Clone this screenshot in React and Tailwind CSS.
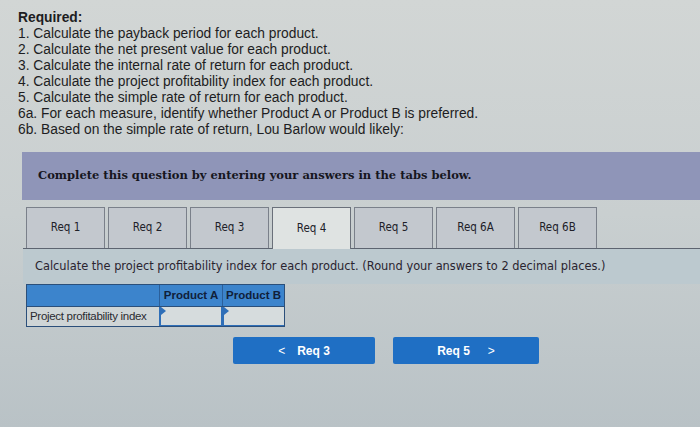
export default function App() {
  const tabs = ["Req 1", "Req 2", "Req 3", "Req 4", "Req 5", "Req 6A", "Req 6B"];
  const lines = [
    "1. Calculate the payback period for each product.",
    "2. Calculate the net present value for each product.",
    "3. Calculate the internal rate of return for each product.",
    "4. Calculate the project profitability index for each product.",
    "5. Calculate the simple rate of return for each product.",
    "6a. For each measure, identify whether Product A or Product B is preferred.",
    "6b. Based on the simple rate of return, Lou Barlow would likely:",
  ];

  return (
    <div className="w-[700px] h-[427px] overflow-hidden bg-gradient-to-b from-[#d2d6d5] via-[#c9cfd0] to-[#b9c2c6] font-['Liberation_Sans',Arial,sans-serif]">
      {/* Required list */}
      <div className="pt-[10px] pl-[18px] text-[13.8px] leading-[16px] text-[#1d1d22]">
        <div className="font-bold">Required:</div>
        {lines.map((l) => (
          <div key={l}>{l}</div>
        ))}
      </div>

      {/* Banner */}
      <div className="mt-[14px] ml-[22px] h-[48px] bg-[#8f95b8] flex items-center pl-[16px]">
        <span className="font-['DejaVu_Serif',serif] font-bold text-[11.5px] text-[#16161e] whitespace-nowrap">
          Complete this question by entering your answers in the tabs below.
        </span>
      </div>

      {/* Tabs */}
      <div className="mt-[7px] ml-[23px] flex items-end gap-[3px] border-b border-[#5d6470] pl-[3px]">
        {tabs.map((t) => {
          const active = t === "Req 4";
          return (
            <div
              key={t}
              className={
                active
                  ? "w-[79px] h-[42px] -mb-px border border-b-0 border-[#6a707a] bg-[#dfe3e2] flex items-center justify-center"
                  : "w-[79px] h-[41px] border border-b-0 border-[#7a808a] bg-[#c3c8ce] flex items-center justify-center"
              }
            >
              <span className="font-['DejaVu_Sans_Condensed','DejaVu_Sans',sans-serif] text-[11.5px] text-[#202028]">
                {t}
              </span>
            </div>
          );
        })}
      </div>

      {/* Content */}
      <div className="ml-[23px] bg-[#bcc9cf] h-[35px] flex items-center pl-[12px]">
        <span className="font-['DejaVu_Sans',sans-serif] text-[11.4px] text-[#2a2430] whitespace-nowrap">
          Calculate the project profitability index for each product. (Round your answers to 2 decimal places.)
        </span>
      </div>

      {/* Table */}
      <div className="ml-[26px] w-[259px] border border-[#2b4f7a]">
        <div className="flex h-[21px] bg-[#3c84cc] text-[11.5px] font-bold text-[#10203a]">
          <div className="w-[132px]" />
          <div className="w-[63px] border-l border-[#2b5f9a] flex items-center justify-center">Product A</div>
          <div className="w-[62px] border-l border-[#2b5f9a] flex items-center justify-center">Product B</div>
        </div>
        <div className="flex h-[20px] bg-[#cfd5d6] border-t border-[#2b4f7a] text-[11.5px] text-[#2a2a30]">
          <div className="w-[132px] flex items-center pl-[3px] tracking-[-0.3px]">Project profitability index</div>
          <div className="relative w-[63px] border-l-2 border-r border-b border-[#2f6fb8] bg-[#d6dcdd]">
            <span className="absolute left-0 top-0 w-0 h-0 border-t-[4px] border-b-[4px] border-l-[5px] border-t-transparent border-b-transparent border-l-[#2f6fb8]" />
          </div>
          <div className="relative w-[62px] border-l-2 border-b border-[#2f6fb8] bg-[#d6dcdd]">
            <span className="absolute left-0 top-0 w-0 h-0 border-t-[4px] border-b-[4px] border-l-[5px] border-t-transparent border-b-transparent border-l-[#2f6fb8]" />
          </div>
        </div>
      </div>

      {/* Nav buttons */}
      <div className="mt-[10px] ml-[233px] flex gap-[18px]">
        <div className="w-[142px] h-[27px] rounded-[2px] bg-[#1f6fc4] flex items-center justify-center gap-[12px] text-white font-bold text-[12px]">
          <span className="font-normal">&lt;</span>
          <span>Req 3</span>
        </div>
        <div className="w-[146px] h-[27px] rounded-[2px] bg-[#1f6fc4] flex items-center justify-center gap-[18px] text-white font-bold text-[12px]">
          <span>Req 5</span>
          <span className="font-normal">&gt;</span>
        </div>
      </div>
    </div>
  );
}
